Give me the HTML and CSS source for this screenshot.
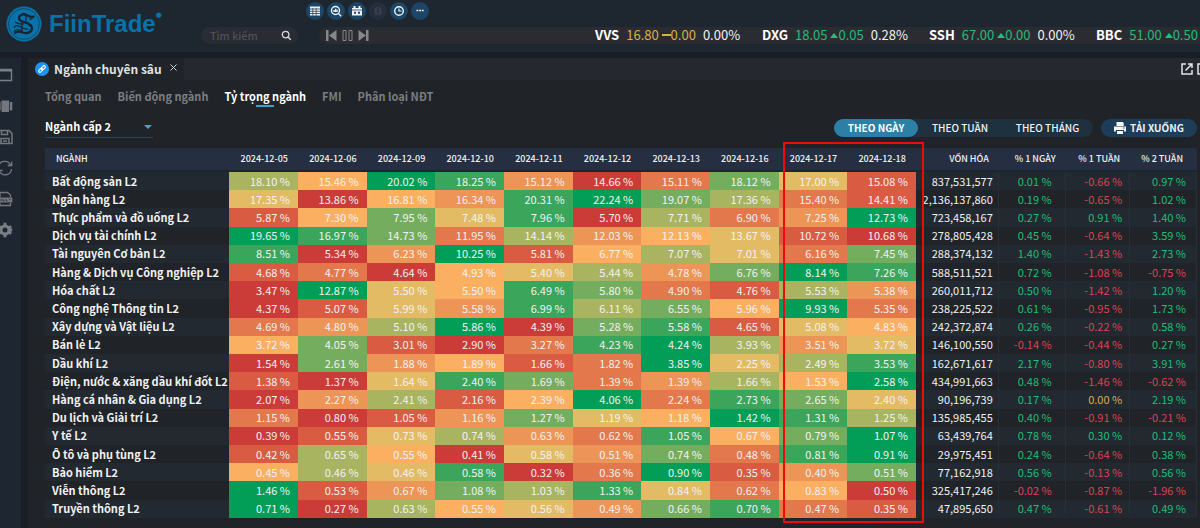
FILE: index.html
```html
<!DOCTYPE html>
<html lang="vi">
<head>
<meta charset="utf-8">
<title>FiinTrade - Ngành chuyên sâu</title>
<link rel="stylesheet" href="styles.css">
</head>
<body>
<header class="topbar">
  <a class="brand" href="#" aria-label="FiinTrade">
    <svg class="brand-mark" viewBox="0 0 36 36" aria-hidden="true">
      <circle cx="18" cy="18" r="17.500" fill="#0972a8"/>
      <circle cx="18" cy="18" r="15.400" fill="none" stroke="#15405e" stroke-width="0.800"/>
      <g fill="none" stroke="#182433" stroke-linecap="round" stroke-linejoin="round">
        <path d="M27.500 10.500c-2.500 1.300-4.500-.2-7-1.500-3-1.600-7-.3-7.500 2.500-.3 2.500 2 3.800 5.500 4.700 4.500 1.200 8 2.800 7.500 6.600-.6 3.800-5.500 5.300-9.500 3.700-3-1.300-5.500-1-7.500.4" stroke-width="2.300"/>
        <path d="M12.500 12.500c1.500 4 10 3.500 12.500 8.500M20 9v6M16 17.500v8.500" stroke-width="1.300"/>
        <path d="M8 21.500c1.500-2.700 4-2 6-.8s5.500 2.800 8 2.300M9.500 16c2 2 5 1.800 8 2M24 13.500l2.500-1.500M8.500 25c2-2 4.500-1.500 6.500-.5" stroke-width="1.200"/>
      </g>
    </svg>
    <span class="brand-name">FiinTrade</span><sup class="brand-dot">●</sup>
  </a>
  <form class="search">
    <input class="search-input" type="text" placeholder="Tìm kiếm" aria-label="Tìm kiếm">
    <button class="icon-button" type="button" aria-label="Tìm">
      <svg width="11" height="11" viewBox="0 0 11 11"><circle cx="4.600" cy="4.600" r="3.300" fill="none" stroke="#d5d8dc" stroke-width="1.300"/><path d="M7.200 7.200l2.600 2.600" stroke="#d5d8dc" stroke-width="1.500"/></svg>
    </button>
  </form>
  <div class="tools">
    <div class="shortcuts">
      <button class="round" type="button" aria-label="Bảng giá"><svg viewBox="0 0 18 18"><rect x="4" y="4.500" width="10" height="9" fill="#eef2f6"/><path d="M4 7h10M4 9.300h10M4 11.500h10M6.800 6v7.500M10.200 6v7.500" stroke="#1d4565" stroke-width=".8"/></svg></button>
      <button class="round" type="button" aria-label="Tra cứu"><svg viewBox="0 0 18 18"><circle cx="8.500" cy="8.500" r="4" fill="none" stroke="#eef2f6" stroke-width="1.400"/><path d="M11.500 11.500l2.700 2.700M7 8v2M8.500 6.800V10M10 7.600V10" stroke="#eef2f6" stroke-width="1.300"/></svg></button>
      <button class="round" type="button" aria-label="Lịch sự kiện"><svg viewBox="0 0 18 18"><path d="M4 6h10v7.500H4zM5.500 4h2v2h-2zM10.500 4h2v2h-2z" fill="#eef2f6"/><path d="M4 8h10" stroke="#1d4565" stroke-width=".8"/><path d="M6 9.700h2v2H6zM10 9.700h2v2h-2z" fill="#1d4565"/></svg></button>
      <button class="round round-off" type="button" aria-label="Thông báo" disabled><svg viewBox="0 0 18 18"><circle cx="9" cy="9" r="4" fill="#393e4a"/><path d="M9 6.500v5" stroke="#242f3d" stroke-width="1.500"/></svg></button>
      <button class="round" type="button" aria-label="Lịch sử"><svg viewBox="0 0 18 18"><circle cx="9" cy="9" r="4.300" fill="none" stroke="#eef2f6" stroke-width="1.400"/><path d="M9 6.500V9h2.500" fill="none" stroke="#eef2f6" stroke-width="1.100"/></svg></button>
      <button class="round" type="button" aria-label="Thêm"><svg viewBox="0 0 18 18"><path d="M5.500 8.500h1.800M8.200 8.500H10M10.900 8.500h1.800" stroke="#eef2f6" stroke-width="1.400"/></svg></button>
    </div>
    <div class="ticker">
      <div class="player">
        <button class="icon-button" type="button" aria-label="Trước"><svg width="11" height="11" viewBox="0 0 11 11" fill="#84878c"><path d="M0 0h2.500v11H0zM10.500 0v11L3 5.500z"/></svg></button>
        <button class="icon-button" type="button" aria-label="Tạm dừng"><svg width="11" height="11" viewBox="0 0 11 11" fill="none" stroke="#84878c"><path d="M1 .5h3v10H1zM7 .5h3v10H7z"/></svg></button>
        <button class="icon-button" type="button" aria-label="Sau"><svg width="11" height="11" viewBox="0 0 11 11" fill="#84878c"><path d="M8 0h2.500v11H8zM.5 0v11L8 5.500z"/></svg></button>
      </div>
      <div class="quotes">
        <div class="quote"><b>VVS</b><span class="flat">16.80 <i class="dash"></i>0.00</span><span>0.00%</span></div>
        <div class="quote"><b>DXG</b><span class="up">18.05 <i class="rise"></i>0.05</span><span>0.28%</span></div>
        <div class="quote"><b>SSH</b><span class="up">67.00 <i class="rise"></i>0.00</span><span>0.00%</span></div>
        <div class="quote"><b>BBC</b><span class="up">51.00 <i class="rise"></i>0.50</span></div>
      </div>
    </div>
  </div>
</header>
<div class="body">
  <nav class="sidebar" aria-label="Công cụ">
    <button class="icon-button" type="button" aria-label="Cửa sổ"><svg width="13" height="16" viewBox="3 0 13 16"><path d="M1 2.500h13.500v11H1z" fill="none" stroke="#7b7f85" stroke-width="1.400"/><path d="M1 3.500h13.500" stroke="#7b7f85" stroke-width="2"/></svg></button>
    <button class="icon-button" type="button" aria-label="Bố cục"><svg width="13" height="16" viewBox="3 0 13 16" fill="#74787e"><path d="M4.500 2.500h7.500v11.500H4.500zM1 4h2.700v8.500H1zM12.800 4h2.500v8.500h-2.500z"/></svg></button>
    <button class="icon-button" type="button" aria-label="Lưu"><svg width="13" height="16" viewBox="3 0 13 16" fill="none" stroke="#74787e" stroke-width="1.500"><path d="M1 1.500h11l3 3v10H1zM4.500 1.500v4h6v-4M4 14.500v-5h8v5M6 12h4"/></svg></button>
    <button class="icon-button" type="button" aria-label="Làm mới"><svg width="13" height="16" viewBox="3 0 13 16" fill="none" stroke="#74787e" stroke-width="1.300"><path d="M1.500 7a6.300 6.300 0 0 1 12-2M14.700 1.500v4h-4M14.500 9a6.300 6.300 0 0 1-12 2.200M1.500 14.500v-4h4"/></svg></button>
    <button class="icon-button" type="button" aria-label="Tài liệu"><svg width="13" height="16" viewBox="3 0 13 16"><path d="M3 6V1.500h7.500L13.500 4v2M3 12v2.500h10.500V12" fill="none" stroke="#74787e" stroke-width="1.300"/><path d="M1 6.500h14.300v5H1z" fill="#74787e"/><path d="M4 8v2M6 8v2h1.500M9 8v2h1.500M12 8.500h1.500" stroke="#1f2833" fill="none" stroke-width=".8"/></svg></button>
    <button class="icon-button" type="button" aria-label="Cài đặt"><svg width="13" height="16" viewBox="3 0 13 16"><circle cx="8" cy="8" r="4" fill="none" stroke="#7b7f85" stroke-width="3"/><path d="M8 .8v3M8 12.200v3M.8 8h3M12.200 8h3M1.800 4.400l2.600 1.500M11.600 10.100l2.600 1.500M1.800 11.600l2.600-1.500M11.600 5.900l2.600-1.500" stroke="#7b7f85" stroke-width="2.800"/></svg></button>
  </nav>
  <main class="panel">
    <div class="titlebar">
      <div class="title">
        <svg width="14" height="14" viewBox="0 0 14 14" aria-hidden="true"><circle cx="7" cy="7" r="7" fill="#2091ec"/><g fill="none" stroke="#fff" stroke-width="1.100"><rect x="6.400" y="5.700" width="4.800" height="2.600" rx="1.300" transform="rotate(-45 7 7)"/><rect x="2.800" y="5.700" width="4.800" height="2.600" rx="1.300" transform="rotate(-45 7 7)"/></g></svg>
        <h1 class="title-text">Ngành chuyên sâu</h1>
        <button class="icon-button close" type="button" aria-label="Đóng"><svg width="7" height="7" viewBox="0 0 7 7"><path d="M.5.5l6 6M6.500.5l-6 6" stroke="#d0d2d5"/></svg></button>
      </div>
      <div class="window-tools">
        <button class="icon-button" type="button" aria-label="Mở rộng"><svg width="12" height="12" viewBox="0 0 12 12" fill="none" stroke="#e4e6e8" stroke-width="1.500"><path d="M5 1H1v10h10V7M7 1h4v4M11 1L4.500 7.500"/></svg></button>
        <button class="icon-button" type="button" aria-label="Phóng to"><svg width="3" height="12" viewBox="0 0 3 12" fill="none" stroke="#e4e6e8" stroke-width="1.500"><path d="M1 1h10v10H1z"/></svg></button>
      </div>
    </div>
    <nav class="tabs">
      <a class="tab" href="#">Tổng quan</a>
      <a class="tab" href="#">Biến động ngành</a>
      <a class="tab tab-active" href="#" aria-current="page">Tỷ trọng ngành</a>
      <a class="tab" href="#">FMI</a>
      <a class="tab" href="#">Phân loại NĐT</a>
    </nav>
    <div class="controls">
      <div class="level">
        <select class="level-select" aria-label="Cấp ngành"><option>Ngành cấp 2</option></select>
      </div>
      <div class="period">
        <button class="pill pill-active" type="button">THEO NGÀY</button>
        <button class="pill" type="button">THEO TUẦN</button>
        <button class="pill pill-month" type="button">THEO THÁNG</button>
      </div>
      <button class="download" type="button">
        <svg width="12" height="12" viewBox="0 0 12 12" aria-hidden="true"><path d="M2.500 0h6.200l1 1v3H2.500zM0 4.500h12V9.500h-2V8H2v1.500H0zM3 9h6v3H3z" fill="#f2f4f6"/><circle cx="10" cy="6" r=".7" fill="#1d3d58"/></svg>
        TẢI XUỐNG
      </button>
    </div>
    <div class="table-area">
      <table class="heatmap">
        <colgroup>
          <col class="col-name"><col span="10" class="col-day"><col class="col-cap"><col class="col-d1"><col class="col-w"><col class="col-w2">
        </colgroup>
        <thead>
          <tr>
            <th class="name" scope="col">NGÀNH</th>
            <th scope="col">2024-12-05</th><th scope="col">2024-12-06</th><th scope="col">2024-12-09</th><th scope="col">2024-12-10</th><th scope="col">2024-12-11</th><th scope="col">2024-12-12</th><th scope="col">2024-12-13</th><th scope="col">2024-12-16</th><th scope="col">2024-12-17</th><th scope="col">2024-12-18</th>
            <th scope="col">VỐN HÓA</th><th scope="col">% 1 NGÀY</th><th scope="col">% 1 TUẦN</th><th class="last" scope="col">% 2 TUẦN</th>
          </tr>
        </thead>
        <tbody id="rows"></tbody>
      </table>
      <div class="highlight"></div>
    </div>
  </main>
</div>
<script src="table.js"></script>
</body>
</html>
```

FILE: styles.css
```css
* { box-sizing: border-box; }

body {
  margin: 0;
  min-height: 100vh;
  display: flex;
  flex-direction: column;
  background: #1a1d26;
  color: #f1f2f3;
  font: 11px/16px "Noto Sans CJK SC", "Noto Sans", sans-serif;
}

button, input, select { font: inherit; color: inherit; border: 0; padding: 0; background: none; }
.icon-button { display: flex; flex: none; }
svg { display: block; flex: none; }

.topbar {
  display: flex;
  height: 52px;
  background: #1e262f;
}

.brand {
  display: flex;
  align-items: center;
  gap: 7px;
  width: 201px;
  height: 48px;
  padding-left: 6px;
  color: #0972a8;
  text-decoration: none;
}
.brand-mark { width: 36px; height: 36px; }
.brand-name { font: bold 24px/28px "Liberation Sans", sans-serif; }
.brand-dot { align-self: flex-start; margin: 9px 0 0 -7px; font: 7px/12px "DejaVu Sans", sans-serif; }

.search {
  display: flex;
  align-items: center;
  align-self: flex-start;
  width: 97px;
  height: 17px;
  margin-top: 27px;
  padding: 0 6px 0 9px;
  border-radius: 9px;
  background: #2a2c33;
}
.search-input { flex: 1; min-width: 0; height: 20px; padding-bottom: 2px; font-size: 11px; line-height: 18px; outline: 0; }
.search-input::placeholder { color: #54575d; opacity: 1; }

.tools { flex: 1; min-width: 0; padding: 2px 0 0 8px; overflow: hidden; }
.shortcuts { display: flex; gap: 3px; height: 25px; }
.round { width: 18px; height: 18px; border-radius: 50%; background: #1d4565; }
.round-off { background: #242f3d; }

.ticker {
  display: flex;
  align-items: center;
  height: 17px;
  margin-left: 13px;
  padding-left: 7px;
  border-radius: 9px 0 0 9px;
  background: #2a2c32;
}
.player { display: flex; gap: 5px; width: 269px; flex: none; }
.quotes { display: flex; padding-bottom: 2px; font-size: 13px; line-height: 20px; }
.quote { display: flex; gap: 7px; flex: none; width: 167px; white-space: nowrap; }
.quote:last-child { width: auto; }
.quote b { color: #fff; }
.flat { color: #dcae49; }
.up { color: #24bd79; }
.dash { display: inline-block; width: 9px; height: 2px; margin-bottom: 4px; background: #dcae49; }
.rise {
  display: inline-block;
  margin-bottom: 2px;
  border: 4px solid transparent;
  border-top: 0;
  border-bottom: 5px solid #24bd79;
}

.body { display: flex; flex: 1; gap: 7px; padding-top: 6px; }

.sidebar {
  display: flex;
  flex-direction: column;
  gap: 15px;
  width: 21px;
  padding-top: 9px;
  background: #1e2731;
}

.panel {
  display: flex;
  flex: 1;
  flex-direction: column;
  min-width: 0;
  background: #202328;
}

.titlebar { display: flex; height: 22px; }
.title { display: flex; align-items: center; gap: 5px; width: 156px; padding-left: 7px; }
.title-text { margin: 0; font-size: 12px; line-height: 20px; font-weight: 700; white-space: nowrap; color: #dfe1e3; }
.close { margin: 0 0 4px 3px; }
.window-tools {
  display: flex;
  flex: 1;
  align-items: center;
  justify-content: flex-end;
  gap: 4px;
  background: #26282f;
}

.tabs { display: flex; gap: 16px; padding: 8px 0 0 17px; }
.tab {
  position: relative;
  height: 19px;
  color: #7c7e82;
  font-weight: 700;
  text-decoration: none;
}
.tab-active { color: #fff; }
.tab-active::after {
  content: "";
  position: absolute;
  bottom: 0;
  left: calc(50% - 9px);
  width: 18px;
  height: 2px;
  background: #3aa3cc;
}

.controls { display: flex; align-items: center; height: 31px; margin-top: 5px; padding: 0 3px 0 17px; }
.level { position: relative; width: 108px; margin-right: auto; border-bottom: 1px solid #23465a; }
.level::after {
  content: "";
  position: absolute;
  top: 8px;
  right: 1px;
  border: 4px solid transparent;
  border-top: 4px solid #3aa9d8;
  border-bottom: 0;
}
.level-select { width: 100%; height: 20px; padding-bottom: 3px; appearance: none; font-weight: 700; color: #fff; }
.period { display: flex; border-radius: 9px; background: #1f313e; }
.pill { width: 84px; height: 18px; border-radius: 9px; font-size: 10px; font-weight: 500; line-height: 18px; }
.pill-active { background: #2c80a6; color: #fff; font-weight: 700; }
.pill-month { width: 91px; }
.download {
  display: flex;
  align-items: center;
  justify-content: center;
  gap: 4px;
  width: 96px;
  height: 18px;
  margin-left: 8px;
  border-radius: 9px;
  background: #1d3d58;
  font-size: 10px;
  font-weight: 700;
}

.table-area {
  position: relative;
  display: flex;
  flex: 1;
  margin: 5px 3px 10px 17px;
}
.heatmap {
  width: 100%;
  table-layout: fixed;
  border-collapse: separate;
  border-spacing: 0;
}
.col-name { width: 16%; }
.col-day { width: 5.960%; }
.col-cap { width: 7.200%; }
.col-d1 { width: 5.800%; }
.col-w { width: 5.600%; }
.col-w2 { width: 5.800%; }

.heatmap th, .heatmap td { padding: 0 8px 1px 0; text-align: right; white-space: nowrap; }
.heatmap thead th {
  height: 24px;
  padding-right: 10px;
  background: #252f41;
  border-bottom: 2px solid #1c2531;
  font-size: 9px;
  font-weight: 500;
  line-height: 16px;
}
.heatmap .name { text-align: left; padding-left: 7px; padding-right: 0; font-weight: 700; }
.heatmap thead .name { padding-left: 11px; font-weight: 500; }
.heatmap thead .last { padding-right: 14px; }
.heatmap tbody tr:nth-child(odd) { background: #222930; }
.heatmap tbody td { border-right: 1px solid #292d35; }
.heatmap tbody .heat { border: 0; }

.heat0 { background: #cb3b37; }
.heat1 { background: #d95b42; }
.heat2 { background: #e3784c; }
.heat3 { background: #ed9457; }
.heat4 { background: #fbb061; }
.heat5 { background: #e3bb65; }
.heat6 { background: #a9b461; }
.heat7 { background: #75ad5e; }
.heat8 { background: #3ba55b; }
.heat9 { background: #029e58; }

.heatmap .gain { color: #20bf76; }
.heatmap .loss { color: #dc4355; }
.heatmap .even { color: #dcae49; }
.heatmap .cap { padding-right: 5px; }
.heatmap .week { padding-right: 7px; }
.heatmap .day { padding-right: 13px; }
.heatmap tbody .fortnight { padding-right: 10px; }

.highlight {
  position: absolute;
  top: -6px;
  bottom: -5px;
  left: 64.100%;
  width: 12.200%;
  border: 2px solid #f00b0b;
}
```

FILE: table.js
```js
// Sector | ten daily weights | colour rank of each weight | market cap | 1 day, 1 week, 2 weeks
const sectors = [
  ["Bất động sản L2", "18.10 15.46 20.02 18.25 15.12 14.66 15.11 18.12 17.00 15.08", "6498302751", "837,531,577", "0.01 -0.66 0.97"],
  ["Ngân hàng L2", "17.35 13.86 16.81 16.34 20.31 22.24 19.07 17.36 15.40 14.41", "5043897621", "2,136,137,860", "0.19 -0.65 1.02"],
  ["Thực phẩm và đồ uống L2", "5.87 7.30 7.95 7.48 7.96 5.70 7.71 6.90 7.25 12.73", "1475806239", "723,458,167", "0.27 0.91 1.40"],
  ["Dịch vụ tài chính L2", "19.65 16.97 14.73 11.95 14.14 12.03 12.13 13.67 10.72 10.68", "9872634510", "278,805,428", "0.45 -0.64 3.59"],
  ["Tài nguyên Cơ bản L2", "8.51 5.34 6.23 10.25 5.81 6.77 7.07 7.01 6.16 7.45", "8039146527", "288,374,132", "1.40 -1.43 2.73"],
  ["Hàng & Dịch vụ Công nghiệp L2", "4.68 4.77 4.64 4.93 5.40 5.44 4.78 6.76 8.14 7.26", "1204563798", "588,511,521", "0.72 -1.08 -0.75"],
  ["Hóa chất L2", "3.47 12.87 5.50 5.50 6.49 5.80 4.90 4.76 5.53 5.38", "0954872163", "260,011,712", "0.50 -1.42 1.20"],
  ["Công nghệ Thông tin L2", "4.37 5.07 5.99 5.58 6.99 6.11 6.55 5.96 9.93 5.35", "0153867492", "238,225,522", "0.61 -0.95 1.73"],
  ["Xây dựng và Vật liệu L2", "4.69 4.80 5.10 5.86 4.39 5.28 5.58 4.65 5.08 4.83", "2369078154", "242,372,874", "0.26 -0.22 0.58"],
  ["Bán lẻ L2", "3.72 4.05 3.01 2.90 3.27 4.23 4.24 3.93 3.51 3.72", "4710289635", "146,100,550", "-0.14 -0.44 0.27"],
  ["Dầu khí L2", "1.54 2.61 1.88 1.89 1.66 1.82 3.85 2.25 2.49 3.53", "0734129568", "162,671,617", "2.17 -0.80 3.91"],
  ["Điện, nước & xăng dầu khí đốt L2", "1.38 1.37 1.64 2.40 1.69 1.39 1.39 1.66 1.53 2.58", "1058723649", "434,991,663", "0.48 -1.46 -0.62"],
  ["Hàng cá nhân & Gia dụng L2", "2.07 2.27 2.41 2.16 2.39 4.06 2.24 2.73 2.65 2.40", "0361492875", "90,196,739", "0.17 0.00 2.19"],
  ["Du lịch và Giải trí L2", "1.15 0.80 1.05 1.16 1.27 1.19 1.18 1.42 1.31 1.25", "2013754986", "135,985,455", "0.40 -0.91 -0.21"],
  ["Y tế L2", "0.39 0.55 0.73 0.74 0.63 0.62 1.05 0.67 0.79 1.07", "0156328479", "63,439,764", "0.78 0.30 0.12"],
  ["Ô tô và phụ tùng L2", "0.42 0.65 0.55 0.41 0.58 0.51 0.74 0.48 0.81 0.91", "1640537289", "29,975,451", "0.24 -0.64 0.38"],
  ["Bảo hiểm L2", "0.45 0.46 0.46 0.58 0.32 0.36 0.90 0.35 0.40 0.51", "4658029137", "77,162,918", "0.56 -0.13 0.56"],
  ["Viễn thông L2", "1.46 0.53 0.67 1.08 1.03 1.33 0.84 0.62 0.83 0.50", "9137685240", "325,417,246", "-0.02 -0.87 -1.96"],
  ["Truyền thông L2", "0.71 0.27 0.63 0.55 0.56 0.49 0.66 0.70 0.47 0.35", "9064537821", "47,895,650", "0.47 -0.61 0.49"]
];

const body = document.getElementById("rows");
const periods = ["day", "week", "fortnight"];

function addCell(row, tag, text, className) {
  const cell = document.createElement(tag);
  cell.textContent = text;
  cell.className = className;
  row.append(cell);
}

for (const [name, weights, ranks, cap, changes] of sectors) {
  const row = document.createElement("tr");
  addCell(row, "th", name, "name");
  row.firstChild.scope = "row";
  weights.split(" ").forEach((value, i) => addCell(row, "td", value + " %", "heat heat" + ranks[i]));
  addCell(row, "td", cap, "cap");
  changes.split(" ").forEach((value, i) => {
    const trend = value > 0 ? "gain" : value < 0 ? "loss" : "even";
    addCell(row, "td", value + " %", trend + " " + periods[i]);
  });
  body.append(row);
}
```
